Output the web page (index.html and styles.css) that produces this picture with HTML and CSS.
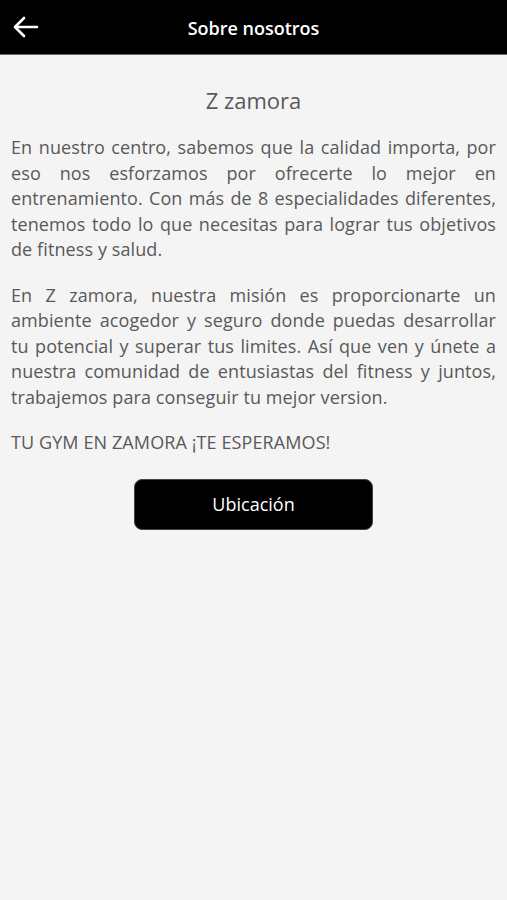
FILE: index.html
```html
<!DOCTYPE html>
<html lang="es">
  <head>
    <meta charset="UTF-8" />
    <meta name="viewport" content="width=device-width, initial-scale=1.0" />
    <title>Sobre nosotros</title>
    <link rel="stylesheet" href="styles.css">
  </head>
  <body>
    <header class="topbar">
      <button class="back" aria-label="Volver">
        <svg width="26" height="22" viewBox="0 0 26 22" fill="none" stroke="#fff" stroke-width="2.6" stroke-linecap="round" stroke-linejoin="round">
          <path d="M24 11H3" />
          <path d="M11 2L2 11l9 9" />
        </svg>
      </button>
      <h1>Sobre nosotros</h1>
    </header>
    <main class="content">
      <h2>Z zamora</h2>
      <p>En nuestro centro, sabemos que la calidad importa, por eso nos esforzamos por ofrecerte lo mejor en entrenamiento. Con más de 8 especialidades diferentes, tenemos todo lo que necesitas para lograr tus objetivos de fitness y salud.</p>
      <p>En Z zamora, nuestra misión es proporcionarte un ambiente acogedor y seguro donde puedas desarrollar tu potencial y superar tus limites. Así que ven y únete a nuestra comunidad de entusiastas del fitness y juntos, trabajemos para conseguir tu mejor version.</p>
      <p>TU GYM EN ZAMORA ¡TE ESPERAMOS!</p>
      <div class="actions">
        <button class="location">Ubicación</button>
      </div>
    </main>
  </body>
</html>
```

FILE: styles.css
```css
body {
  font-family: "Open Sans", "Noto Sans", Arial, sans-serif;
  background-color: #f4f4f4;
  color: #595959;
  margin: 0;
  padding: 0;
  min-height: 100vh;
}
.topbar {
  height: 54px;
  background-color: #000;
  border-bottom: 1px solid #6a6a6a;
  display: flex;
  align-items: center;
  justify-content: center;
  position: relative;
}
.topbar h1 {
  margin: 2px 0 0;
  color: #fff;
  font-size: 18px;
  font-weight: 600;
}
.back {
  position: absolute;
  left: 13px;
  top: 16px;
  background: none;
  border: none;
  padding: 0;
  display: flex;
}
.content {
  padding: 30px 11px 0 11px;
}
h2 {
  margin: 0 0 20px;
  text-align: center;
  font-size: 22px;
  font-weight: 400;
  color: #595959;
}
p {
  margin: 0 0 20px;
  font-size: 18px;
  line-height: 25.5px;
  letter-spacing: 0.1px;
  text-align: justify;
}
.actions {
  display: flex;
  justify-content: center;
  padding-top: 3px;
}
.location {
  width: 239px;
  height: 51px;
  background-color: #000;
  color: #fff;
  border: 1px solid #444;
  border-radius: 8px;
  font-family: inherit;
  font-size: 18px;
  cursor: pointer;
}
```
